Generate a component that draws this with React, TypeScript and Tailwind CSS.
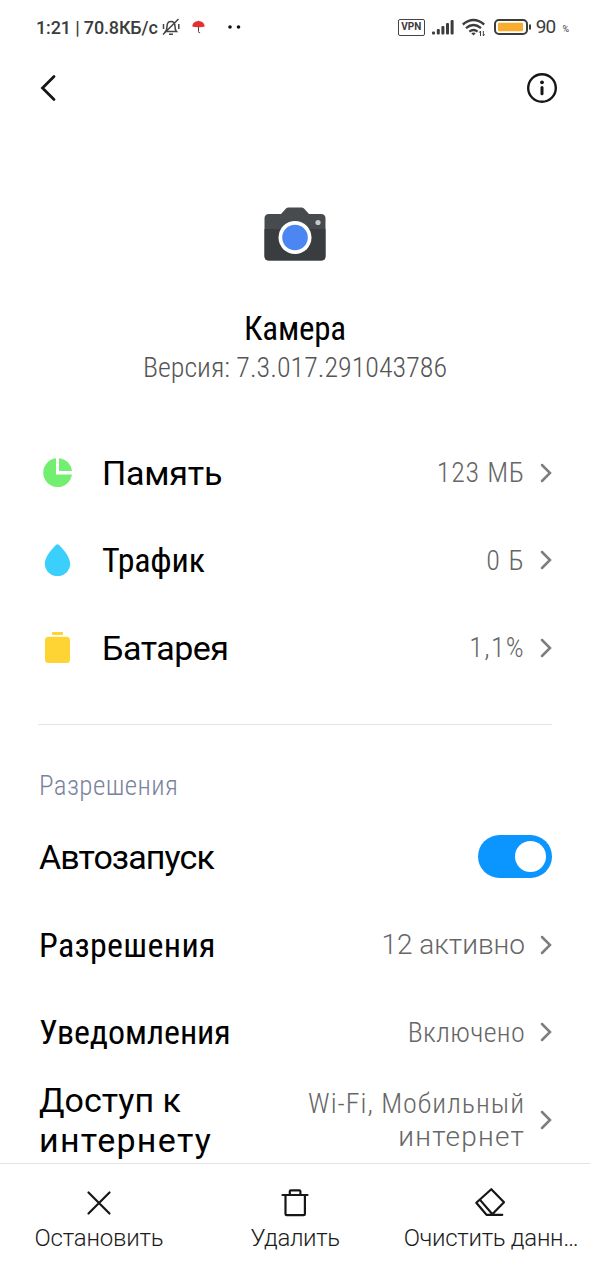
import type { ReactNode } from 'react';

function Chevron() {
  return (
    <svg className="h-5 w-3 shrink-0" viewBox="0 0 12 20" fill="none" stroke="#7d7d7d" strokeWidth="2.5" strokeLinecap="round">
      <path d="M2 2 L10 10 L2 18" />
    </svg>
  );
}

type RowProps = {
  icon?: ReactNode;
  label: ReactNode;
  value?: ReactNode;
  labelClass?: string;
  valueClass?: string;
  children?: ReactNode;
};

function Row({ icon, label, value, labelClass = '', valueClass = '', children }: RowProps) {
  return (
    <div className="flex h-[87.5px] items-center">
      {icon && <span className="flex w-[63px] shrink-0 pl-[5px]">{icon}</span>}
      <span className={`pl-px text-[34px] leading-10 whitespace-nowrap text-black ${labelClass}`}>{label}</span>
      {children ?? (
        <>
          <span className={`mr-[15px] ml-auto text-right text-[28px] leading-[33px] font-light whitespace-nowrap text-[#666] ${valueClass}`}>
            {value}
          </span>
          <Chevron />
        </>
      )}
    </div>
  );
}

function StatusBar() {
  return (
    <div className="flex h-[54px] items-center pr-[21px] pl-9 text-[18px] text-[#3c3c3c] [font-stretch:100%]">
      <span className="w-[125px] text-[18px] font-medium tracking-[-0.15px] whitespace-nowrap">1:21 | 70.8КБ/с</span>
      {/* Muted bell */}
      <svg className="h-5 w-5" viewBox="0 0 20 20" fill="none" stroke="#444" strokeWidth="1.5">
        <path d="M4.500 14.500h11c-1.500-1.500-1.500-3-1.500-5 0-3-1.500-5-4-5s-4 2-4 5c0 2 0 3.500-1.500 5zM8 17.300h4M2 17.500 17.500 2M2.500 7v5M17.800 7v5" />
      </svg>
      {/* Umbrella */}
      <svg className="ml-[11px] h-4 w-[13px]" viewBox="0 0 13 16" fill="none">
        <path d="M6.500 6v6.500q0 1.500 1.600 1.300" stroke="#444" strokeWidth="1" />
        <path d="M.3 7.500C.5 4 3 2.200 6.200 2l.3-1 .3 1c3.200.2 5.700 2 5.900 5.500q-3 .8-6.200.6-3.200.2-6.200-.6z" fill="#e62f32" />
      </svg>
      <svg className="ml-[22px] h-3 w-4" viewBox="0 0 16 12" fill="#111">
        <circle cx="3" cy="6" r="1.800" />
        <circle cx="11.500" cy="6" r="1.800" />
      </svg>

      <span className="ml-auto flex h-[17px] w-[27px] items-center justify-center rounded-[2px] border-[1.5px] border-[#444] text-[10px] leading-none font-bold">
        VPN
      </span>
      <svg className="ml-[7px] h-4 w-[22px]" viewBox="0 0 22 16" fill="#3c3c3c">
        <rect x="0" y="12.500" width="3" height="3" rx="1" />
        <rect x="4.800" y="10" width="3" height="5.500" rx="1" />
        <rect x="9.400" y="7" width="3" height="8.500" rx="1" />
        <rect x="14" y="4" width="3" height="11.500" rx="1" />
        <rect x="18.600" y="1" width="3" height="14.500" rx="1" />
      </svg>
      <svg className="ml-2 h-[19px] w-6" viewBox="0 0 24 19" fill="none" stroke="#3c3c3c" strokeWidth="2.300">
        <path d="M.8 6.500q10.700-9 21.400 0M4 10.200q7.500-6.300 15 0M7.400 13.600q4.100-3.300 8.200 0" />
        <path d="M9.300 15.200q2.200-1.600 4.400 0L11.500 17.500z" fill="#3c3c3c" stroke="none" />
        <path d="M18.500 18v-5l-1.300 1.700M21.300 13v5l1.300-1.700" strokeWidth="1" />
      </svg>
      <svg className="ml-2 h-[18px] w-[38px]" viewBox="0 0 38 18" fill="none">
        <rect x="1" y="2" width="32" height="14" rx="4" stroke="#3c3c3c" strokeWidth="2" />
        <rect x="4" y="4.700" width="25" height="8.600" rx="1" fill="#f8ad2e" />
        <path d="M36 6.500v5" stroke="#3c3c3c" strokeWidth="2" />
      </svg>
      <span className="ml-1 text-[19px] tracking-[-0.9px]">90</span>
      <span className="mt-1.5 ml-[7px] text-[9px]">%</span>
    </div>
  );
}

function CameraLogo() {
  return (
    <svg className="h-[54px] w-[62px]" viewBox="0 0 62 54">
      <path d="M5 7h12l5-5.500Q23 .5 24.500.5h13Q39 .5 40 1.500L45 7h12q4.500 0 4.500 4.500v37.500q0 4.500-4.500 4.500H5Q.5 53.500.5 49V11.500Q.5 7 5 7z" fill="#484b4e" />
      <path d="M.5 22h61v27q0 4.500-4.500 4.500H5Q.5 53.500.5 49z" fill="#3a3d40" />
      <circle cx="31" cy="30.500" r="16.500" fill="#fff" />
      <circle cx="31" cy="30.500" r="12.800" fill="#4b86f2" />
      <circle cx="54" cy="15.500" r="2.600" fill="#c5c9cc" />
    </svg>
  );
}

function PieIcon() {
  return (
    <svg className="h-8 w-[30px]" viewBox="0 0 30 32" fill="#72ef70">
      <path d="M13 1.300A14.400 14.400 0 1 0 28.900 17.500H13z" />
      <path d="M16 1.200a14.500 14.500 0 0 1 13 12.700H16z" />
    </svg>
  );
}

function DropIcon() {
  return (
    <svg className="h-8 w-[30px]" viewBox="0 0 30 32" fill="#3bcffb">
      <path d="M13.200.8q1.300-1.300 2.600 0C21 6 27.200 13.500 27.200 19.500a12.700 12.700 0 0 1-25.400 0C1.800 13.500 8 6 13.200.8z" />
    </svg>
  );
}

function BatteryIcon() {
  return (
    <svg className="h-8 w-[30px]" viewBox="0 0 30 32" fill="#fdd433">
      <rect x="9" y="0" width="11" height="3" rx=".8" />
      <rect x="2" y="4.800" width="25" height="26.200" rx="3.500" />
    </svg>
  );
}

function Action({ icon, label, labelClass = '' }: { icon: ReactNode; label: string; labelClass?: string }) {
  return (
    <button className="flex w-[196px] shrink-0 flex-col items-center pt-[23px]">
      {icon}
      <span className={`mt-[5px] text-[24px] leading-7 font-light whitespace-nowrap text-[#1c1c1c] [font-stretch:100%] ${labelClass}`}>
        {label}
      </span>
    </button>
  );
}

export default function App() {
  return (
    <div className="flex h-[1280px] w-[590px] flex-col overflow-hidden bg-white font-[Roboto,sans-serif] [font-stretch:75%]">
      <StatusBar />

      <header className="flex h-[67px] items-center justify-between pr-8 pl-[38px]">
        <svg className="h-7 w-5" viewBox="0 0 20 28" fill="none" stroke="#161616" strokeWidth="2.800" strokeLinecap="round">
          <path d="M16 2.500 4.500 14 16 25.500" />
        </svg>
        <svg className="h-8 w-8" viewBox="0 0 32 32" fill="none" stroke="#161616" strokeWidth="2.400">
          <circle cx="16" cy="16" r="13.800" />
          <circle cx="16" cy="10.300" r="1.900" fill="#161616" stroke="none" />
          <path d="M16 15.500v6.200" strokeWidth="3" strokeLinecap="round" />
        </svg>
      </header>

      <main className="h-[1042px] shrink-0 overflow-hidden">
        <div className="flex flex-col items-center pt-[86px]">
          <CameraLogo />
          <h1 className="mt-12 text-[33px] leading-10 tracking-[-0.2px] text-black">Камера</h1>
          <p className="mt-0.5 text-[28px] leading-[34px] font-light text-[#555]">Версия: 7.3.017.291043786</p>
        </div>

        <div className="px-[38px] pt-11">
          <Row icon={<PieIcon />} label="Память" value="123 МБ" labelClass="[font-stretch:100%] tracking-[-0.2px]" valueClass="tracking-[0.8px]" />
          <Row icon={<DropIcon />} label="Трафик" value="0 Б" labelClass="tracking-[-0.2px]" valueClass="tracking-[1.2px]" />
          <Row icon={<BatteryIcon />} label="Батарея" value="1,1%" labelClass="[font-stretch:100%] tracking-[-0.5px]" valueClass="tracking-[1.3px]" />
          <div className="mt-8 h-px bg-[#e4e4e4]" />

          <h2 className="mt-[45px] mb-3 pl-px text-[27px] leading-8 font-light tracking-[0.4px] text-[#7a839c]">Разрешения</h2>
          <Row label="Автозапуск" labelClass="[font-stretch:100%] tracking-[-0.9px]">
            <span className="mb-0.5 ml-auto flex h-[43px] w-[74px] items-center justify-end rounded-full bg-[#0a95ff] pr-1.5">
              <span className="h-[31px] w-[31px] rounded-full bg-white" />
            </span>
          </Row>
          <Row label="Разрешения" value="12 активно" labelClass="tracking-[0.3px]" valueClass="[font-stretch:100%]" />
          <Row label="Уведомления" value="Включено" labelClass="tracking-[-0.1px]" valueClass="tracking-[0.3px]" />
          <Row
            labelClass="[font-stretch:100%]"
            label={
              <>
                <span className="block">Доступ к</span>
                <span className="block tracking-[1.3px]">интернету</span>
              </>
            }
            value={
              <>
                <span className="block tracking-[1px]">Wi-Fi, Мобильный</span>
                <span className="block tracking-[1.2px] [font-stretch:100%]">интернет</span>
              </>
            }
          />
        </div>
      </main>

      <footer className="flex h-[117px] shrink-0 border-t border-[#e2e2e2] pl-px">
        <Action
          label="Остановить"
          labelClass="tracking-[-0.2px]"
          icon={
            <svg className="h-8 w-8" viewBox="0 0 32 32" fill="none" stroke="#161616" strokeWidth="2.200" strokeLinecap="round">
              <path d="M5.500 5.500l21 21M26.500 5.500l-21 21" />
            </svg>
          }
        />
        <Action
          label="Удалить"
          labelClass="tracking-[-0.4px]"
          icon={
            <svg className="h-8 w-8" viewBox="0 0 32 32" fill="none" stroke="#161616" strokeWidth="2.200" strokeLinecap="round" strokeLinejoin="round">
              <path d="M3.500 8h25M6.500 8v19q0 1.200 1.200 1.200h17q1.200 0 1.200-1.200V8M10.800 8V4.300q0-1 1-1h8.600q1 0 1 1V8" />
            </svg>
          }
        />
        <Action
          label="Очистить данн…"
          labelClass="tracking-[-0.3px]"
          icon={
            <svg className="mr-0.5 h-8 w-8" viewBox="0 0 32 32" fill="none" stroke="#161616" strokeWidth="2.200" strokeLinecap="round" strokeLinejoin="round">
              <path d="M17.300 2.200 30 15.300 17.800 27.800H12.500L2.300 15.800zM5.800 12.600 18.200 27M12.500 27.800h15.800" />
            </svg>
          }
        />
      </footer>
    </div>
  );
}
